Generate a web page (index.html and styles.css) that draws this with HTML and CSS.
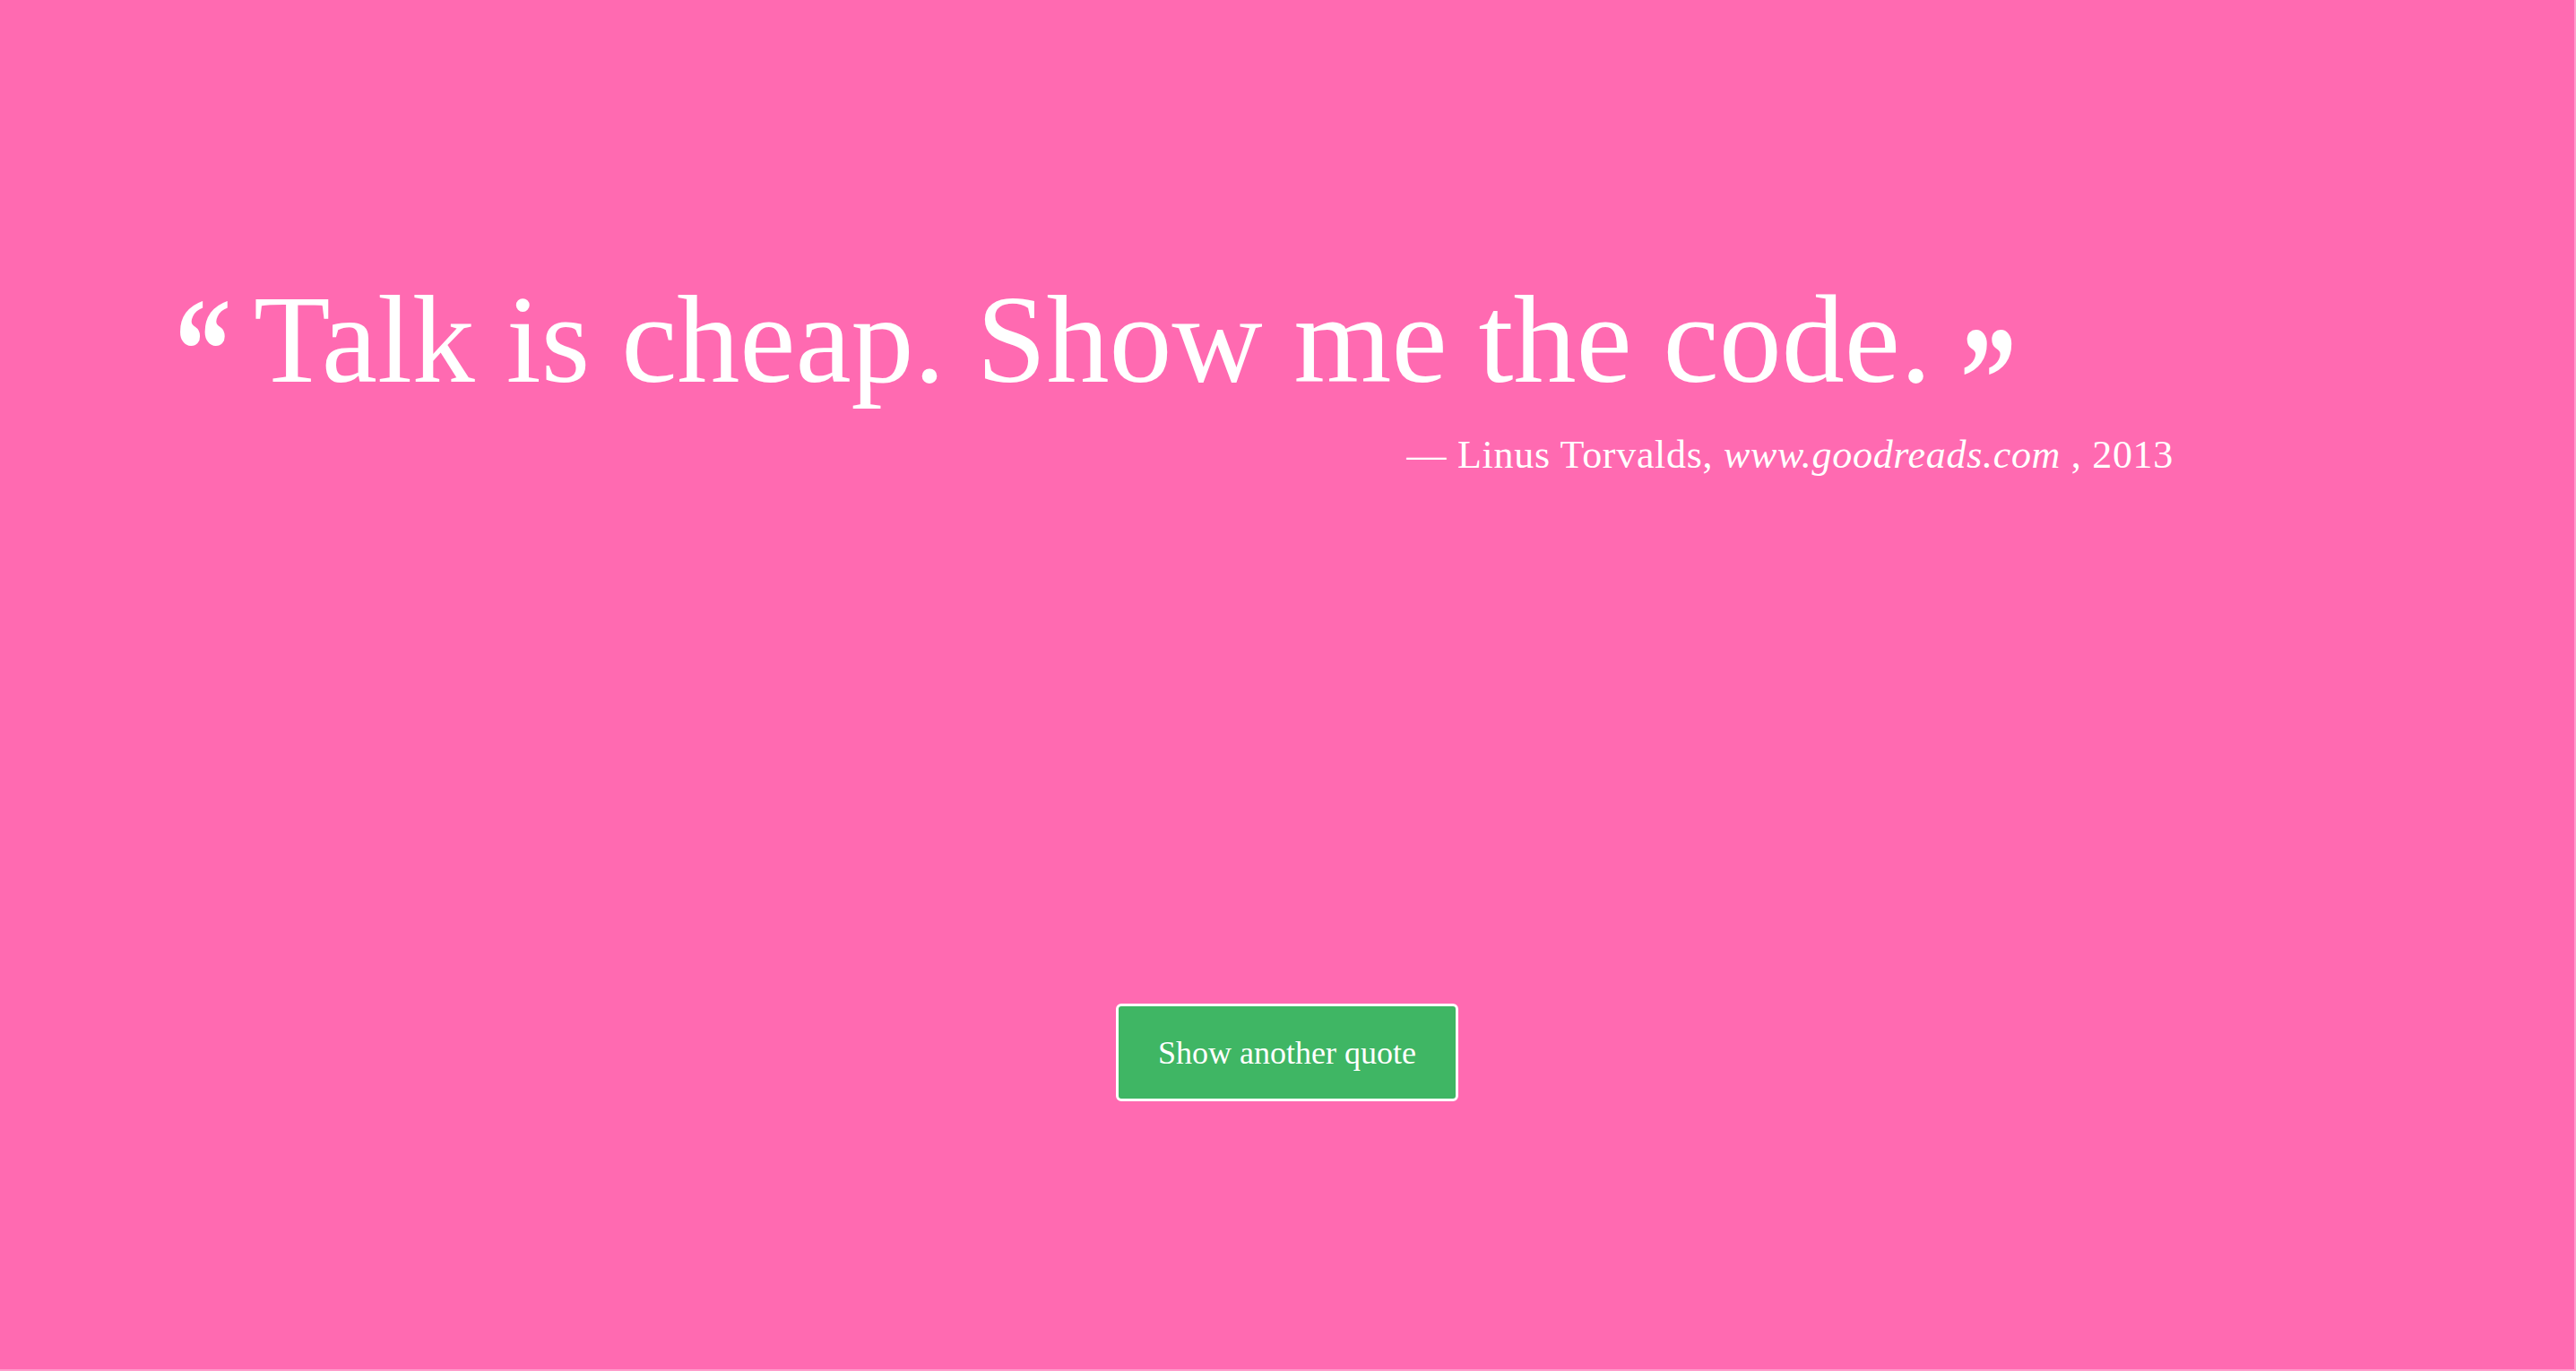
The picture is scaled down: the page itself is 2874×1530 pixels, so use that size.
FILE: index.html
```html
<!DOCTYPE html>
<html lang="en">
<head>
<meta charset="utf-8">
<title>Random Quote</title>
<link rel="stylesheet" href="styles.css">
</head>
<body>
<div class="page">
  <section class="quote-box">
    <h1 class="quote-text"><span class="qmark qmark-open">&ldquo;</span>Talk is cheap. Show me the code.<span class="qmark qmark-close">&rdquo;</span></h1>
    <p class="attribution">&mdash; Linus Torvalds, <cite class="source">www.goodreads.com</cite> , 2013</p>
  </section>
  <div class="actions">
    <button class="btn-new" type="button">Show another quote</button>
  </div>
</div>
</body>
</html>
```
FILE: styles.css
```css
html, body {
  margin: 0;
  padding: 0;
}
body {
  background: #ff9ccb;
  font-family: "Liberation Serif", "DejaVu Serif", serif;
  color: #ffffff;
}
.page {
  box-sizing: border-box;
  width: 2874px;
  height: 1530px;
  background: #ff6ab1;
  border-right: 2px solid #ff9ccb;
  border-bottom: 2px solid #ff9ccb;
  display: flex;
  flex-direction: column;
}
.quote-box {
  width: 2230px;
  margin-left: 195px;
  padding-top: 299px;
}
.quote-text {
  margin: 0;
  font-weight: 400;
  font-size: 140px;
  line-height: 160px;
  white-space: nowrap;
}
.qmark {
  display: inline-block;
  vertical-align: baseline;
  font-weight: 700;
  font-size: 138px;
  line-height: 0.6;
  transform-origin: left top;
}
.qmark-open {
  margin-right: 19px;
  transform: translateY(3px) scale(0.91, 1.19);
}
.qmark-close {
  margin-left: 32px;
  transform: translateY(35px) scale(0.91, 1.19);
}
.attribution {
  margin: 23px 0 0;
  text-align: right;
  font-size: 44px;
  letter-spacing: 0.7px;
}
.source {
  font-style: italic;
}
.actions {
  display: flex;
  justify-content: center;
  margin-top: 587px;
}
.btn-new {
  box-sizing: border-box;
  width: 382px;
  height: 109px;
  background: #3fb664;
  border: 3px solid #ffffff;
  border-radius: 6px;
  color: #ffffff;
  font-family: "Liberation Serif", "DejaVu Serif", serif;
  font-size: 36px;
  cursor: pointer;
}
```
